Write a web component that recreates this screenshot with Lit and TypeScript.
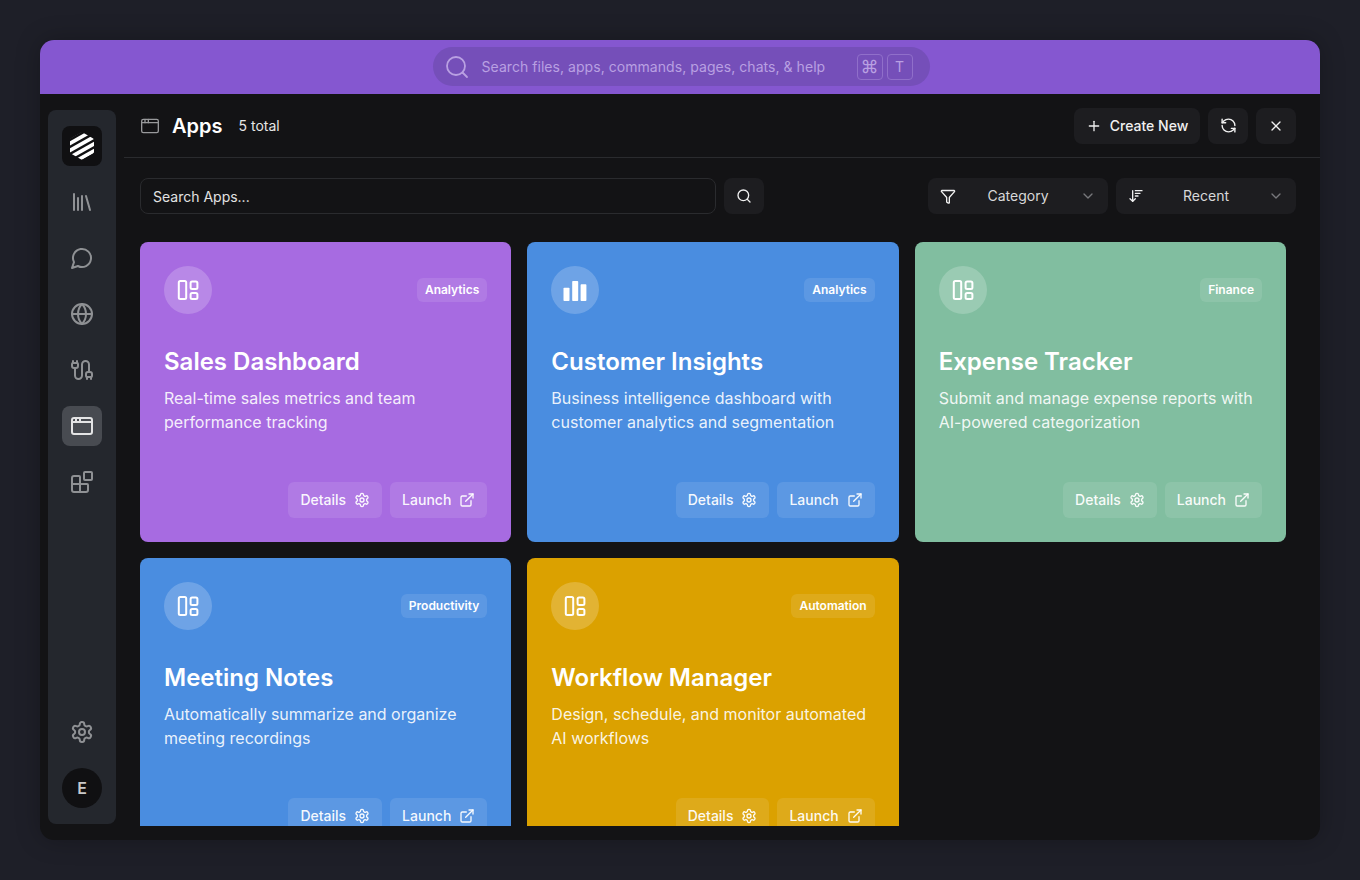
import { LitElement, css, html, svg } from 'lit';
import { customElement } from 'lit/decorators.js';

const icon = (size: number, body: unknown, sw = 2) => html`<svg width=${size} height=${size} viewBox="0 0 24 24" fill="none" stroke="currentColor" stroke-width=${sw} stroke-linecap="round" stroke-linejoin="round">${body}</svg>`;

const gearPath = svg`<path d="M12.22 2h-.44a2 2 0 0 0-2 2v.18a2 2 0 0 1-1 1.73l-.43.25a2 2 0 0 1-2 0l-.15-.08a2 2 0 0 0-2.73.73l-.22.38a2 2 0 0 0 .73 2.73l.15.1a2 2 0 0 1 1 1.72v.51a2 2 0 0 1-1 1.74l-.15.09a2 2 0 0 0-.73 2.73l.22.38a2 2 0 0 0 2.73.73l.15-.08a2 2 0 0 1 2 0l.43.25a2 2 0 0 1 1 1.73V20a2 2 0 0 0 2 2h.44a2 2 0 0 0 2-2v-.18a2 2 0 0 1 1-1.73l.43-.25a2 2 0 0 1 2 0l.15.08a2 2 0 0 0 2.73-.73l.22-.39a2 2 0 0 0-.73-2.73l-.15-.08a2 2 0 0 1-1-1.74v-.5a2 2 0 0 1 1-1.74l.15-.09a2 2 0 0 0 .73-2.73l-.22-.38a2 2 0 0 0-2.73-.73l-.15.08a2 2 0 0 1-2 0l-.43-.25a2 2 0 0 1-1-1.73V4a2 2 0 0 0-2-2z"/><circle cx="12" cy="12" r="3"/>`;
const windowPath = svg`<rect x="2" y="4" width="20" height="16" rx="2"/><path d="M10 4v4"/><path d="M2 8h20"/><path d="M6 4v4"/>`;
const layoutPath = svg`<rect x="2.800" y="3" width="7.400" height="18" rx="1.500"/><rect x="14.600" y="3.400" width="6.800" height="7.600" rx="1.500"/><rect x="14.600" y="15" width="6.800" height="6" rx="1.500"/>`;
const externalPath = svg`<path d="M15 3h6v6"/><path d="M10 14 21 3"/><path d="M18 13v6a2 2 0 0 1-2 2H5a2 2 0 0 1-2-2V8a2 2 0 0 1 2-2h6"/>`;
const chevron = svg`<path d="m6 9 6 6 6-6"/>`;

const apps = [
  { title: 'Sales Dashboard', desc: 'Real-time sales metrics and team performance tracking', tag: 'Analytics', color: '#a76be1', chart: false },
  { title: 'Customer Insights', desc: 'Business intelligence dashboard with customer analytics and segmentation', tag: 'Analytics', color: '#4a8de0', chart: true },
  { title: 'Expense Tracker', desc: 'Submit and manage expense reports with AI-powered categorization', tag: 'Finance', color: '#81bea0', chart: false },
  { title: 'Meeting Notes', desc: 'Automatically summarize and organize meeting recordings', tag: 'Productivity', color: '#4a8de0', chart: false },
  { title: 'Workflow Manager', desc: 'Design, schedule, and monitor automated AI workflows', tag: 'Automation', color: '#dba100', chart: false },
];

@customElement('app-root')
export class AppRoot extends LitElement {
  static styles = css`
    :host {
      display: block;
      height: 880px;
      padding: 40px;
      box-sizing: border-box;
      background: #1e1f28;
      font-family: Inter, "Liberation Sans", sans-serif;
      color: #fff;
    }
    .window {
      height: 800px;
      border-radius: 14px;
      overflow: hidden;
      background: #131315;
      display: flex;
      flex-direction: column;
      box-shadow: 0 0 24px rgba(0, 0, 0, 0.25);
    }
    .topbar {
      height: 54px;
      flex: none;
      background: #8557d0;
      display: flex;
      align-items: center;
      justify-content: center;
      box-sizing: border-box;
      padding: 7px 0 8px;
    }
    .omni {
      width: 497px;
      height: 39px;
      margin-left: 2px;
      border-radius: 20px;
      background: #754fb9;
      display: flex;
      align-items: center;
      padding: 0 17px 0 12px;
      box-sizing: border-box;
      color: #b9a0e2;
      font-size: 14px;
    }
    .omni .hint { margin-left: 13px; flex: 1; letter-spacing: 0.05px; }
    .kbd {
      width: 26px;
      height: 26px;
      margin-left: 4px;
      box-sizing: border-box;
      border: 1px solid #906fca;
      border-radius: 4px;
      display: flex;
      align-items: center;
      justify-content: center;
      font-size: 14px;
    }
    .kbd.cmd { font-size: 18px; }
    .below {
      flex: 1;
      min-height: 0;
      display: flex;
      padding: 16px 0 14px 8px;
      gap: 8px;
    }
    .rail {
      width: 68px;
      flex: none;
      margin-bottom: 2px;
      background: #24272d;
      border-radius: 8px;
      display: flex;
      flex-direction: column;
      align-items: center;
      padding: 16px 0;
      box-sizing: border-box;
      gap: 16px;
      color: #8f9194;
    }
    .rail-btn {
      width: 40px;
      height: 40px;
      border-radius: 8px;
      display: flex;
      align-items: center;
      justify-content: center;
    }
    .rail-btn.logo { background: #101012; }
    .rail-btn.active { background: #484b51; color: #e4e4e5; }
    .spacer { flex: 1; }
    .avatar {
      width: 40px;
      height: 40px;
      border-radius: 50%;
      background: #101012;
      color: #c9c9ca;
      font-size: 16px;
      font-weight: 600;
      display: flex;
      align-items: center;
      justify-content: center;
    }
    .main {
      flex: 1;
      min-width: 0;
      margin-top: -16px;
      display: flex;
      flex-direction: column;
    }
    .head {
      height: 64px;
      flex: none;
      box-sizing: border-box;
      border-bottom: 1px solid #2a2b2e;
      display: flex;
      align-items: center;
      padding: 0 24px 0 16px;
    }
    .head .win { color: #98999b; display: flex; }
    .head h1 { margin: 0 0 0 12px; font-size: 20px; font-weight: 600; line-height: 28px; }
    .head .count { margin-left: 16px; font-size: 14px; color: #e6e6e6; }
    .head .grow { flex: 1; }
    .btn {
      height: 36px;
      border-radius: 8px;
      background: #1d1d20;
      display: flex;
      align-items: center;
      justify-content: center;
      font-size: 14px;
      line-height: 20px;
      font-weight: 500;
      color: #f0f0f0;
      box-sizing: border-box;
    }
    .btn.create { width: 126px; gap: 8px; margin-right: 8px; }
    .btn.square { width: 40px; margin-right: 8px; }
    .btn.square:last-child { margin-right: 0; }
    .tools {
      flex: none;
      display: flex;
      align-items: center;
      padding: 20px 24px 28px 16px;
    }
    .field {
      width: 576px;
      height: 36px;
      box-sizing: border-box;
      border: 1px solid #2a2b2e;
      border-radius: 8px;
      padding: 0 12px;
      display: flex;
      align-items: center;
      font-size: 14px;
      color: #e2e2e2;
    }
    .btn.find { width: 40px; margin-left: 8px; }
    .select {
      width: 180px;
      height: 36px;
      border-radius: 8px;
      background: #1d1d20;
      display: flex;
      align-items: center;
      padding: 0 12px;
      box-sizing: border-box;
      font-size: 14px;
      line-height: 20px;
      color: #d8d8d9;
    }
    .select + .select { margin-left: 8px; }
    .select .label { flex: 1; text-align: center; }
    .select .lead { display: flex; width: 16px; justify-content: center; color: #f0f0f0; }
    .select .chev { display: flex; color: #77787b; }
    .grow { flex: 1; }
    .grid {
      flex: 1;
      min-height: 0;
      overflow: hidden;
      display: grid;
      grid-template-columns: repeat(3, 1fr);
      grid-auto-rows: 300px;
      gap: 16px;
      padding: 0 34px 0 16px;
    }
    .card {
      border-radius: 8px;
      padding: 24px;
      box-sizing: border-box;
      height: 300px;
      display: flex;
      flex-direction: column;
    }
    .card-top {
      display: flex;
      align-items: center;
      justify-content: space-between;
    }
    .disc {
      width: 48px;
      height: 48px;
      border-radius: 50%;
      background: rgba(255, 255, 255, 0.2);
      display: flex;
      align-items: center;
      justify-content: center;
    }
    .tag {
      height: 24px;
      padding: 0 8px;
      border-radius: 6px;
      background: rgba(255, 255, 255, 0.1);
      display: flex;
      align-items: center;
      font-size: 12px;
      line-height: 16px;
      font-weight: 600;
    }
    .card h2 {
      margin: 32px 0 0;
      font-size: 24px;
      font-weight: 600;
      line-height: 32px;
    }
    .card p {
      margin: 8px 0 0;
      font-size: 16px;
      line-height: 24px;
      color: rgba(255, 255, 255, 0.9);
    }
    .actions {
      margin-top: auto;
      display: flex;
      justify-content: flex-end;
      gap: 8px;
    }
    .act {
      height: 36px;
      padding: 0 12px;
      border-radius: 6px;
      background: rgba(255, 255, 255, 0.1);
      display: flex;
      align-items: center;
      gap: 8px;
      font-size: 14px;
      line-height: 20px;
      font-weight: 500;
      color: rgba(255, 255, 255, 0.95);
    }
  `;

  renderLogo() {
    return html`<svg width="24" height="28" viewBox="0 0 24 28">
      <defs><clipPath id="hex"><path d="M10.800 .700a2.400 2.400 0 0 1 2.400 0l9.600 5.600a2.400 2.400 0 0 1 1.200 2v11.400a2.400 2.400 0 0 1-1.200 2l-9.600 5.600a2.400 2.400 0 0 1-2.400 0l-9.600-5.600a2.400 2.400 0 0 1-1.200-2V8.300a2.400 2.400 0 0 1 1.200-2z"/></clipPath></defs>
      <g clip-path="url(#hex)" stroke="#fff" stroke-width="3.700" fill="none">
        <path d="M-3 6 20-7"/><path d="M-3 13 29-5"/><path d="M-3 20 29 2"/><path d="M-3 27 29 9"/><path d="M-3 34 29 16"/>
      </g>
    </svg>`;
  }

  renderCard(a: (typeof apps)[number]) {
    return html`<div class="card" style="background:${a.color}">
      <div class="card-top">
        <div class="disc">
          ${a.chart
            ? html`<svg width="24" height="24" viewBox="0 0 24 24" fill="#fff"><rect x="0.500" y="9.700" width="6" height="13.300" rx="0.800"/><rect x="9.200" y="3" width="6" height="20" rx="0.800"/><rect x="17.600" y="6.300" width="5.800" height="16.700" rx="0.800"/></svg>`
            : icon(24, layoutPath)}
        </div>
        <div class="tag">${a.tag}</div>
      </div>
      <h2>${a.title}</h2>
      <p>${a.desc}</p>
      <div class="actions">
        <div class="act">Details ${icon(16, gearPath)}</div>
        <div class="act">Launch ${icon(16, externalPath)}</div>
      </div>
    </div>`;
  }

  render() {
    return html`<div class="window">
      <div class="topbar">
        <div class="omni">
          ${icon(24, svg`<circle cx="11" cy="11" r="9"/><path d="m22 22-4.500-4.500"/>`, 1.8)}
          <span class="hint">Search files, apps, commands, pages, chats, &amp; help</span>
          <span class="kbd cmd">⌘</span><span class="kbd">T</span>
        </div>
      </div>
      <div class="below">
        <nav class="rail">
          <div class="rail-btn logo">${this.renderLogo()}</div>
          <div class="rail-btn">${icon(24, svg`<path d="m16 6 4 14"/><path d="M12 6v14"/><path d="M8 8v12"/><path d="M4 4v16"/>`)}</div>
          <div class="rail-btn">${icon(24, svg`<path d="M7.900 20A9 9 0 1 0 4 16.100L2 22Z"/>`)}</div>
          <div class="rail-btn">${icon(24, svg`<circle cx="12" cy="12" r="10"/><path d="M12 2a14.500 14.500 0 0 0 0 20 14.500 14.500 0 0 0 0-20"/><path d="M2 12h20"/>`)}</div>
          <div class="rail-btn">${icon(24, svg`<path d="M17 19a1 1 0 0 1-1-1v-2a2 2 0 0 1 2-2h2a2 2 0 0 1 2 2v2a1 1 0 0 1-1 1z"/><path d="M17 21v-2"/><path d="M19 14V6.500a1 1 0 0 0-7 0v11a1 1 0 0 1-7 0V10"/><path d="M21 21v-2"/><path d="M3 5V3"/><path d="M4 10a2 2 0 0 1-2-2V6a1 1 0 0 1 1-1h4a1 1 0 0 1 1 1v2a2 2 0 0 1-2 2z"/><path d="M7 5V3"/>`)}</div>
          <div class="rail-btn active">${icon(24, windowPath)}</div>
          <div class="rail-btn">${icon(24, svg`<path d="M10 22V7a1 1 0 0 0-1-1H4a2 2 0 0 0-2 2v12a2 2 0 0 0 2 2h12a2 2 0 0 0 2-2v-5a1 1 0 0 0-1-1H2"/><rect x="14" y="2" width="8" height="8" rx="1"/>`)}</div>
          <div class="spacer"></div>
          <div class="rail-btn">${icon(24, gearPath)}</div>
          <div class="avatar">E</div>
        </nav>
        <section class="main">
          <header class="head">
            <span class="win">${icon(20, windowPath, 1.6)}</span>
            <h1>Apps</h1>
            <span class="count">5 total</span>
            <span class="grow"></span>
            <div class="btn create">${icon(16, svg`<path d="M5 12h14"/><path d="M12 5v14"/>`)} Create New</div>
            <div class="btn square">${icon(17, svg`<path d="M21 12a9 9 0 0 0-9-9 9.750 9.750 0 0 0-6.740 2.740L3 8"/><path d="M3 3v5h5"/><path d="M3 12a9 9 0 0 0 9 9 9.750 9.750 0 0 0 6.740-2.740L21 16"/><path d="M16 16h5v5"/>`)}</div>
            <div class="btn square">${icon(16, svg`<path d="M18 6 6 18"/><path d="m6 6 12 12"/>`)}</div>
          </header>
          <div class="tools">
            <div class="field">Search Apps...</div>
            <div class="btn find">${icon(16, svg`<circle cx="11" cy="11" r="8"/><path d="m21 21-4.300-4.300"/>`)}</div>
            <span class="grow"></span>
            <div class="select">
              <span class="lead">${icon(17, svg`<path d="M10 20a1 1 0 0 0 .553.895l2 1A1 1 0 0 0 14 21v-7a2 2 0 0 1 .517-1.341L21.740 4.670A1 1 0 0 0 21 3H3a1 1 0 0 0-.742 1.670l7.225 7.989A2 2 0 0 1 10 14z"/>`)}</span>
              <span class="label">Category</span>
              <span class="chev">${icon(16, chevron)}</span>
            </div>
            <div class="select">
              <span class="lead">${icon(16, svg`<path d="m3 16 4 4 4-4"/><path d="M7 20V4"/><path d="M11 4h10"/><path d="M11 8h7"/><path d="M11 12h4"/>`)}</span>
              <span class="label">Recent</span>
              <span class="chev">${icon(16, chevron)}</span>
            </div>
          </div>
          <div class="grid">${apps.map((a) => this.renderCard(a))}</div>
        </section>
      </div>
    </div>`;
  }
}
